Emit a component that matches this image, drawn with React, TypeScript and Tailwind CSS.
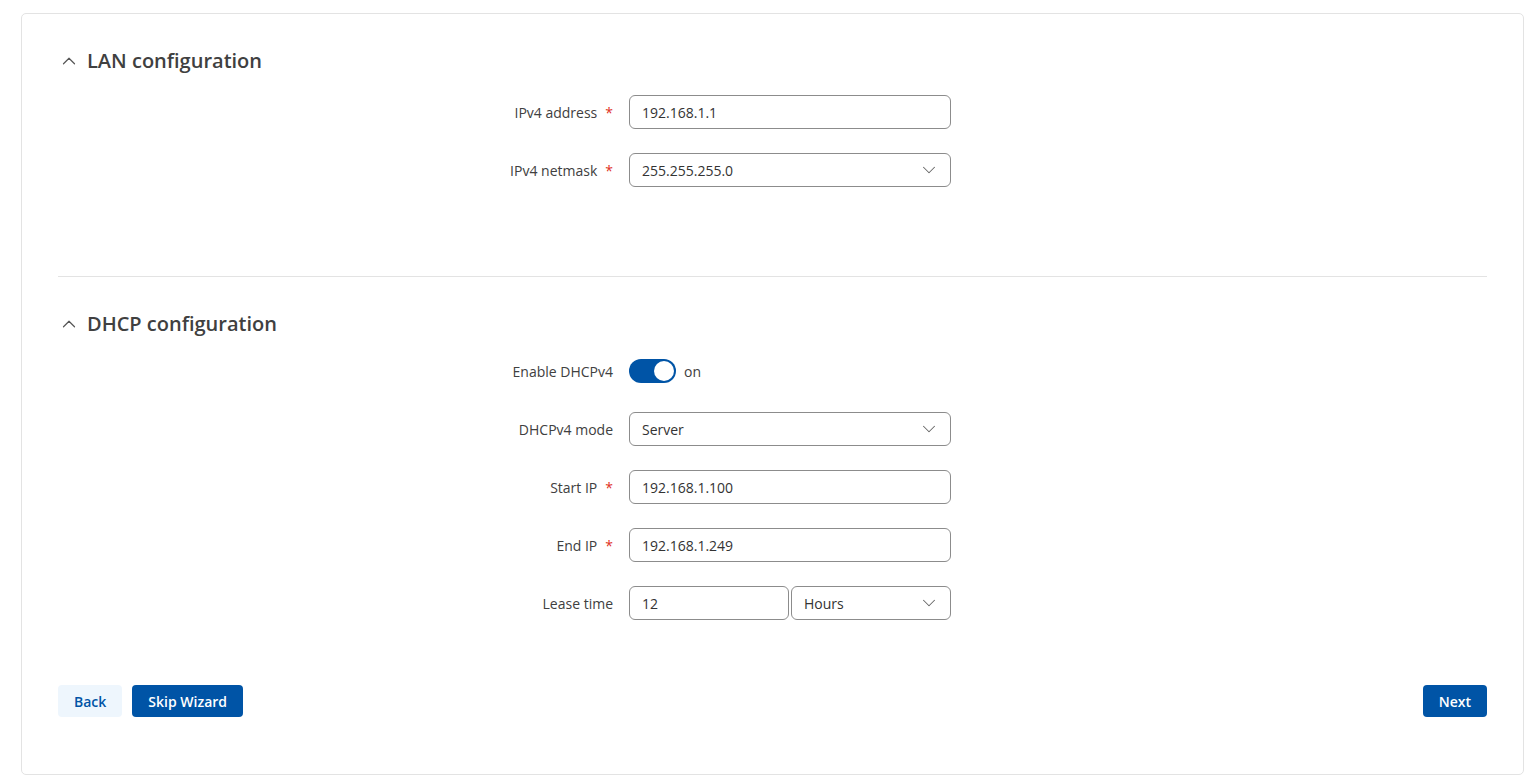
import { ChevronDown, ChevronUp } from 'lucide-react';

function Label({ text, required }: { text: string; required?: boolean }) {
  return (
    <div className="w-[555px] shrink-0 text-right text-[14px] text-[#404040]">
      {text}
      {required && <span className="ml-[8px] text-[#e0301e]">*</span>}
    </div>
  );
}

function TextInput({ value, className = 'w-[322px]' }: { value: string; className?: string }) {
  return (
    <div
      className={`${className} h-[34px] flex items-center px-[12px] rounded-[6px] border border-[#8c8c8c] bg-white text-[14px] text-[#333]`}
    >
      {value}
    </div>
  );
}

function SelectInput({ value, className = 'w-[322px]' }: { value: string; className?: string }) {
  return (
    <div
      className={`${className} h-[34px] flex items-center justify-between pl-[12px] pr-[10px] rounded-[6px] border border-[#8c8c8c] bg-white text-[14px] text-[#333]`}
    >
      <span>{value}</span>
      <ChevronDown className="w-[22px] h-[22px] text-[#666]" strokeWidth={1.1} />
    </div>
  );
}

function Row({ children }: { children: React.ReactNode }) {
  return <div className="flex items-center gap-[16px] h-[34px]">{children}</div>;
}

function SectionTitle({ text }: { text: string }) {
  return (
    <div className="flex items-center h-[28px]">
      <ChevronUp className="w-[22px] h-[22px] text-[#555]" strokeWidth={1.3} />
      <h2 className="ml-[7px] text-[20px] font-semibold text-[#404040]">{text}</h2>
    </div>
  );
}

export default function App() {
  return (
    <div
      className="min-h-screen bg-white pt-[13px] pl-[21px] pr-[4px] pb-[7px]"
      style={{ fontFamily: '"Open Sans", "Noto Sans", sans-serif' }}
    >
      <div className="h-[762px] border border-[#e3e3e3] rounded-[5px] px-[36px] pt-[33px] flex flex-col">
        {/* LAN */}
        <SectionTitle text="LAN configuration" />
        <div className="mt-[20px] flex flex-col gap-[24px]">
          <Row>
            <Label text="IPv4 address" required />
            <TextInput value="192.168.1.1" />
          </Row>
          <Row>
            <Label text="IPv4 netmask" required />
            <SelectInput value="255.255.255.0" />
          </Row>
        </div>

        <div className="mt-[89px] border-t border-[#e3e3e3]" />

        {/* DHCP */}
        <div className="mt-[33px]">
          <SectionTitle text="DHCP configuration" />
        </div>
        <div className="mt-[16px] flex flex-col gap-[24px]">
          <Row>
            <Label text="Enable DHCPv4" />
            <div className="flex items-center">
              <div className="w-[47px] h-[24px] rounded-full bg-[#0054a6] relative">
                <div className="absolute right-[2px] top-[2px] w-[20px] h-[20px] rounded-full bg-white" />
              </div>
              <span className="ml-[8px] text-[14px] text-[#404040]">on</span>
            </div>
          </Row>
          <Row>
            <Label text="DHCPv4 mode" />
            <SelectInput value="Server" />
          </Row>
          <Row>
            <Label text="Start IP" required />
            <TextInput value="192.168.1.100" />
          </Row>
          <Row>
            <Label text="End IP" required />
            <TextInput value="192.168.1.249" />
          </Row>
          <Row>
            <Label text="Lease time" />
            <div className="flex gap-[2px]">
              <TextInput value="12" className="w-[160px]" />
              <SelectInput value="Hours" className="w-[160px]" />
            </div>
          </Row>
        </div>

        {/* Buttons */}
        <div className="mt-[65px] flex items-center justify-between">
          <div className="flex gap-[10px]">
            <button className="h-[32px] px-[16px] rounded-[4px] bg-[#eef6fd] text-[#0054a6] text-[14px] font-semibold">
              Back
            </button>
            <button className="h-[32px] px-[16px] rounded-[4px] bg-[#0054a6] text-white text-[14px] font-semibold">
              Skip Wizard
            </button>
          </div>
          <button className="h-[32px] px-[16px] rounded-[4px] bg-[#0054a6] text-white text-[14px] font-semibold">
            Next
          </button>
        </div>
      </div>
    </div>
  );
}
